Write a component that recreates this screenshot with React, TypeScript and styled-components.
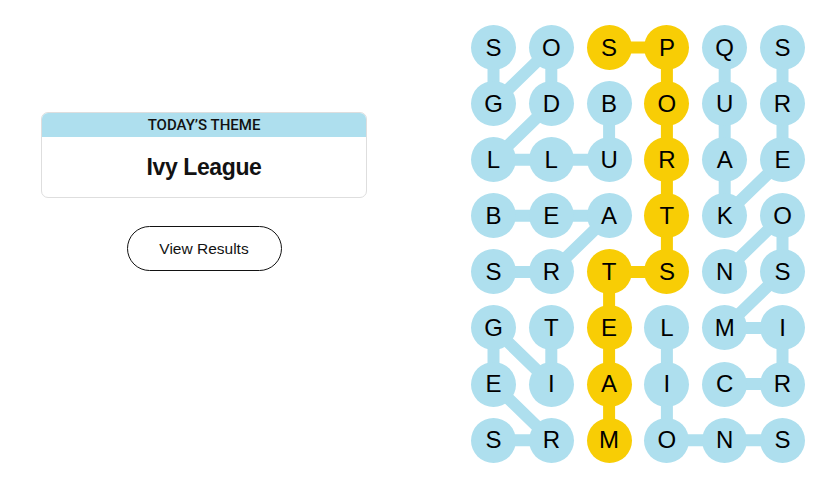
import styled, { createGlobalStyle } from 'styled-components'

const BLUE = '#aedfee'
const YELLOW = '#f8cd05'

const CELL = 45
const COL_GAP = 12.8
const ROW_GAP = 11.1

const LETTERS = [
	'SOSPQS',
	'GDBOUR',
	'LLURAE',
	'BEATKO',
	'SRTSNS',
	'GTELMI',
	'EIAICR',
	'SRMONS',
]

// found words, each a list of [row, col]
const WORDS: { cells: [number, number][]; spangram?: boolean }[] = [
	{ cells: [[1, 2], [2, 2], [2, 1], [2, 0], [1, 1], [0, 1], [1, 0], [0, 0]] },
	{ cells: [[0, 4], [1, 4], [2, 4], [3, 4], [2, 5], [1, 5], [0, 5]] },
	{ cells: [[3, 0], [3, 1], [3, 2], [4, 1], [4, 0]] },
	{ cells: [[5, 1], [6, 1], [5, 0], [6, 0], [7, 1], [7, 0]] },
	{ cells: [[5, 3], [6, 3], [7, 3], [7, 4], [7, 5]] },
	{ cells: [[6, 4], [6, 5], [5, 5], [5, 4], [4, 5], [3, 5], [4, 4]] },
	{
		cells: [[0, 2], [0, 3], [1, 3], [2, 3], [3, 3], [4, 3], [4, 2], [5, 2], [6, 2], [7, 2]],
		spangram: true,
	},
]

const spangramCells = new Set(
	WORDS.filter(w => w.spangram).flatMap(w => w.cells.map(([r, c]) => `${r}-${c}`))
)

const BOARD_W = CELL * 6 + COL_GAP * 5
const BOARD_H = CELL * 8 + ROW_GAP * 7

const cx = (c: number) => CELL / 2 + c * (CELL + COL_GAP)
const cy = (r: number) => CELL / 2 + r * (CELL + ROW_GAP)

const GlobalStyle = createGlobalStyle`
	* { box-sizing: border-box; }
	body {
		margin: 0;
		background: #fff;
		font-family: 'Liberation Sans', Arial, sans-serif;
		color: #000;
	}
`

export default function App() {
	return (
		<>
			<GlobalStyle />
			<Page>
				<Side>
					<ThemeCard>
						<ThemeHeader>Today’s Theme</ThemeHeader>
						<ThemeTitle>Ivy League</ThemeTitle>
					</ThemeCard>
					<ResultsButton>View Results</ResultsButton>
				</Side>
				<Board>
					<Lines width={BOARD_W} height={BOARD_H} viewBox={`0 0 ${BOARD_W} ${BOARD_H}`}>
						{WORDS.map((w, i) => (
							<polyline
								key={i}
								points={w.cells.map(([r, c]) => `${cx(c)},${cy(r)}`).join(' ')}
								fill='none'
								stroke={w.spangram ? YELLOW : BLUE}
								strokeWidth={12}
								strokeLinejoin='round'
							/>
						))}
					</Lines>
					{LETTERS.map((row, r) =>
						row.split('').map((ch, c) => (
							<Letter key={`${r}-${c}`} $spangram={spangramCells.has(`${r}-${c}`)}>
								{ch}
							</Letter>
						))
					)}
				</Board>
			</Page>
		</>
	)
}

const Page = styled.main`
	display: flex;
	align-items: flex-start;
	gap: 104px;
	padding: 25px 0 0 41px;
	width: 838px;
	height: 497px;
`

const Side = styled.section`
	width: 326px;
	margin-top: 87px;
	display: flex;
	flex-direction: column;
	align-items: center;
`

const ThemeCard = styled.div`
	width: 100%;
	border: 1px solid #dedede;
	border-radius: 7px;
	overflow: hidden;
`

const ThemeHeader = styled.div`
	background: ${BLUE};
	height: 24px;
	display: flex;
	align-items: center;
	justify-content: center;
	font-family: Roboto, 'Liberation Sans', sans-serif;
	font-size: 15px;
	font-weight: 500;
	text-transform: uppercase;
	color: #121212;
`

const ThemeTitle = styled.h2`
	margin: 0;
	height: 60px;
	display: flex;
	align-items: center;
	justify-content: center;
	font-size: 23px;
	font-weight: 700;
	letter-spacing: -0.4px;
	color: #121212;
`

const ResultsButton = styled.button`
	margin-top: 28px;
	width: 155px;
	height: 45px;
	border: 1px solid #121212;
	border-radius: 23px;
	background: #fff;
	font-family: inherit;
	font-size: 15.5px;
	color: #121212;
	cursor: pointer;
`

const Board = styled.div`
	position: relative;
	width: ${BOARD_W}px;
	display: grid;
	grid-template-columns: repeat(6, ${CELL}px);
	grid-auto-rows: ${CELL}px;
	column-gap: ${COL_GAP}px;
	row-gap: ${ROW_GAP}px;
`

const Lines = styled.svg`
	position: absolute;
	inset: 0;
`

const Letter = styled.div<{ $spangram: boolean }>`
	position: relative;
	width: ${CELL}px;
	height: ${CELL}px;
	border-radius: 50%;
	background: ${p => (p.$spangram ? YELLOW : BLUE)};
	display: flex;
	align-items: center;
	justify-content: center;
	font-size: 24px;
	color: #000;
	user-select: none;
`
